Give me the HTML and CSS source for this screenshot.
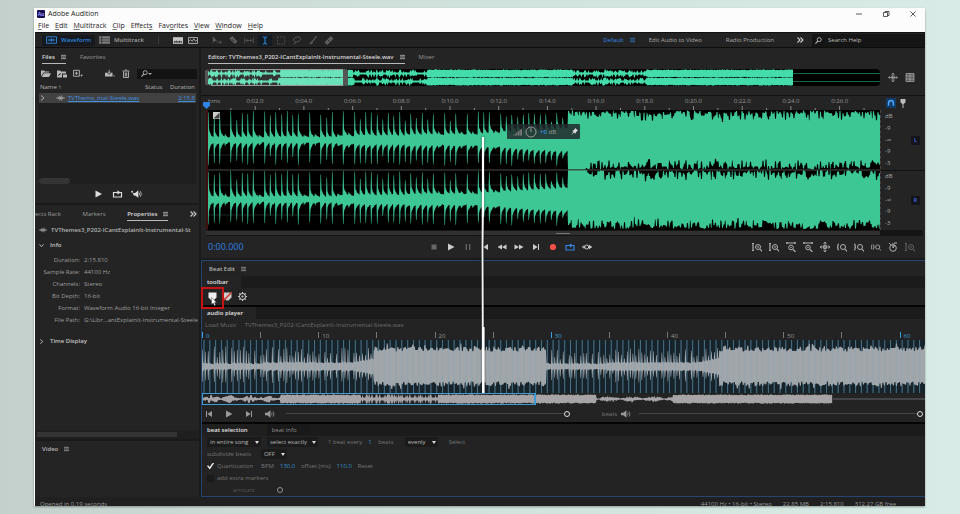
FILE: index.html
```html
<!DOCTYPE html>
<html lang="en">
<head>
<meta charset="utf-8">
<title>Adobe Audition</title>
<link rel="stylesheet" href="styles.css">
</head>
<body>
<svg class="defs" aria-hidden="true">
  <symbol id="menu" viewBox="0 0 6 6"><path d="M0 1h6M0 3h6M0 5h6" stroke="currentColor" stroke-width=".8"/></symbol>
  <symbol id="wave" viewBox="0 0 12 8"><path d="M0 4h12M3 2.500v3M4.500 1v6M6 2v4M7.500 .5v7M9 2.500v3" stroke="currentColor" fill="none"/></symbol>
  <symbol id="waveframe" viewBox="0 0 12 8"><path d="M.5.5h11v7H.5zM2 4h8M4 3v2M6 2v4M8 3v2" stroke="currentColor" fill="none"/></symbol>
  <symbol id="tracks" viewBox="0 0 12 8"><path d="M0 0h12v8H0z" fill="currentColor" opacity=".75"/><path d="M0 2.700h12M0 5.300h12M3 0v8" stroke="#222" stroke-width=".7"/></symbol>
  <symbol id="spectral" viewBox="0 0 12 8"><path d="M0 0h12v8H0z" fill="currentColor"/><path d="M1 5.500h10M2 4.500v2.500M4 4v3M6 5v2M8 4v3M10 5v2" stroke="#222" stroke-width=".8"/></symbol>
  <symbol id="pitch" viewBox="0 0 12 8"><path d="M.5.5h11v7H.5zM1 5l2-2 2 2 2-3 2 3 2-2" stroke="currentColor" fill="none"/></symbol>
  <symbol id="move" viewBox="0 0 12 10"><path d="M1 0v8l2.500-2.500H6z" fill="currentColor"/><path d="M6 7h5M9.500 5.500L11.500 7 9.500 8.500" stroke="currentColor" fill="none"/></symbol>
  <symbol id="razor" viewBox="0 0 10 10"><path d="M4 0l6 6-3 3-6-6z" fill="currentColor"/><path d="M3.500 3.500l3 3" stroke="#222"/></symbol>
  <symbol id="slip" viewBox="0 0 14 10"><path d="M1 1v8M13 1v8M3 5h8M5 3L3 5l2 2M9 3l2 2-2 2" stroke="currentColor" fill="none"/></symbol>
  <symbol id="ibeam" viewBox="0 0 10 10"><path d="M2.500 1c2 0 2.500.5 2.500 1.500 0-1 .5-1.500 2.500-1.500M5 2v6M2.500 9C4.500 9 5 8.500 5 7.500 5 8.500 5.500 9 7.500 9" stroke="currentColor" fill="none" stroke-width="1.100"/></symbol>
  <symbol id="marquee" viewBox="0 0 10 10"><path d="M1 1h8v8H1z" stroke="currentColor" fill="none" stroke-dasharray="1.500 1.500"/></symbol>
  <symbol id="lasso" viewBox="0 0 10 10"><path d="M3 6.500C-1 5 2 1 6 1s4 4 0 5.200c-2 .5-3 .3-3 .3s1 2-1.500 2.500" stroke="currentColor" fill="none"/></symbol>
  <symbol id="brush" viewBox="0 0 10 10"><path d="M9 0L4.500 6" stroke="currentColor" stroke-width="1.300"/><path d="M4 5.500l1.300 1C4.500 9 3 9 1 9.500 2 8 2 6.500 4 5.500z" fill="currentColor"/></symbol>
  <symbol id="heal" viewBox="0 0 10 10"><path d="M7 0l3 3-7 7-3-3z" fill="currentColor"/><path d="M3.500 4l2.500 2.500" stroke="#222"/></symbol>
  <symbol id="more" viewBox="0 0 7 6"><path d="M.5.5L3 3 .5 5.500M3.500.5L6 3 3.500 5.500" stroke="currentColor" fill="none" stroke-width="1.100"/></symbol>
  <symbol id="search" viewBox="0 0 8 8"><circle cx="4.800" cy="3" r="2.300" stroke="currentColor" fill="none"/><path d="M3.200 4.700L.5 7.500" stroke="currentColor" stroke-width="1.200"/></symbol>
  <symbol id="folder" viewBox="0 0 10 8"><path d="M0 1h3l1 1h4v1H2.500L0 7zM2.800 3.700H10L8 7.500H.8z" fill="currentColor"/></symbol>
  <symbol id="import" viewBox="0 0 10 8"><path d="M0 1h3l1 1h5v2H5v4H0z" fill="currentColor"/><path d="M6 5h4v3H6z" fill="currentColor"/><path d="M1 6l3-2" stroke="#222"/></symbol>
  <symbol id="newfile" viewBox="0 0 11 8"><path d="M.5.500h6.500v6.500H.5zM2 3.700h3.500M3.700 2v3.500" stroke="currentColor" fill="none"/><path d="M8 5.500h3L9.500 7.500z" fill="currentColor"/></symbol>
  <symbol id="insert" viewBox="0 0 12 9"><path d="M0 3.500h2.500L5 6l2.500-2.500H9V8H0z" fill="currentColor"/><path d="M5 0v4M3.500 2.500L5 4.500l1.500-2" stroke="currentColor" fill="none"/><path d="M9.500 7H12l-1.200 1.500z" fill="currentColor"/></symbol>
  <symbol id="trash" viewBox="0 0 8 9"><path d="M.5 2h7M3 1h2M1.500 2.500v6h5v-6M3.300 3.500V7.500M4.700 3.500V7.500" stroke="currentColor" fill="none" stroke-width=".9"/></symbol>
  <symbol id="chev" viewBox="0 0 5 6"><path d="M1 .5L4 3 1 5.500" stroke="currentColor" fill="none"/></symbol>
  <symbol id="play" viewBox="0 0 8 8"><path d="M1 .5L7.500 4 1 7.500z" fill="currentColor"/></symbol>
  <symbol id="stop" viewBox="0 0 8 8"><path d="M1.500 1.500h5v5h-5z" fill="currentColor"/></symbol>
  <symbol id="pause" viewBox="0 0 8 8"><path d="M2.300 1v6M5.700 1v6" stroke="currentColor" stroke-width="1.300"/></symbol>
  <symbol id="prev" viewBox="0 0 8 8"><path d="M1.500 1v6" stroke="currentColor"/><path d="M7 1v6L2.300 4z" fill="currentColor"/></symbol>
  <symbol id="next" viewBox="0 0 8 8"><path d="M6.500 1v6" stroke="currentColor"/><path d="M1 1v6l4.700-3z" fill="currentColor"/></symbol>
  <symbol id="rew" viewBox="0 0 10 8"><path d="M5 1.500v5L.5 4zM9.500 1.500v5L5 4z" fill="currentColor"/></symbol>
  <symbol id="ff" viewBox="0 0 10 8"><path d="M5 1.500v5L9.500 4zM.5 1.500v5L5 4z" fill="currentColor"/></symbol>
  <symbol id="rec" viewBox="0 0 8 8"><circle cx="4" cy="4" r="3.100" fill="currentColor"/></symbol>
  <symbol id="loop" viewBox="0 0 10 8"><path d="M3 2.500H1v4.500h8V2.500H7" stroke="currentColor" fill="none" stroke-width="1.200"/><path d="M2.500 2.500h3" stroke="currentColor" stroke-width="1.200"/><path d="M5 .3v4.400l3-2.200z" fill="currentColor"/></symbol>
  <symbol id="skip" viewBox="0 0 10 8"><path d="M0 4h3M7 4h3M2 2.500v3" stroke="currentColor"/><circle cx="4.700" cy="4" r="2" stroke="currentColor" fill="none"/><path d="M7 1.500v5L9.500 4z" fill="currentColor"/></symbol>
  <symbol id="speaker" viewBox="0 0 11 8"><path d="M0 2.500h2.500L6 0v8L2.500 5.500H0z" fill="currentColor"/><path d="M7.300 2.500q1 1.500 0 3M8.800 1q2.200 3 0 6" stroke="currentColor" fill="none" stroke-width=".8"/></symbol>
  <symbol id="autoplay" viewBox="0 0 12 8"><path d="M2 3h2.500L8 0v8L4.500 5.500H3z" fill="currentColor"/><path d="M9 2.500q1 1.500 0 3M10.300 1q2 3 0 6" stroke="currentColor" fill="none" stroke-width=".8"/><circle cx="1.200" cy="1.500" r="1" fill="currentColor"/></symbol>
  <symbol id="zoomamp" viewBox="0 0 10 10"><path d="M1 1v8M0 1.500h2M0 8.500h2M8 7L10 9.500" stroke="currentColor" stroke-width="1.200"/><circle cx="6" cy="5" r="2.500" stroke="currentColor" fill="none"/><path d="M4.800 5h2.400M6 3.800v2.400" stroke="currentColor" stroke-width=".6"/></symbol>
  <symbol id="zoomtime" viewBox="0 0 10 10"><path d="M0 1h10M1 0v2M9 0v2M7 7.500L9.500 10" stroke="currentColor" stroke-width="1.200"/><circle cx="5" cy="5.500" r="2.300" stroke="currentColor" fill="none"/><path d="M4 5.500h2" stroke="currentColor" stroke-width=".7"/></symbol>
  <symbol id="zoomsel" viewBox="0 0 10 10"><path d="M2 2Q.5 2 1 4 1 5 0 5q1 0 1 1-.5 2 1 2M8 7L10 9.500" stroke="currentColor" fill="none" stroke-width="1.100"/><circle cx="6" cy="5" r="2.500" stroke="currentColor" fill="none"/></symbol>
  <symbol id="zoomend" viewBox="0 0 10 10"><path d="M0 2Q1.500 2 1 4 1 5 2 5 1 5 1 6 1.500 8 0 8M8 7L10 9.500" stroke="currentColor" fill="none" stroke-width="1.100"/><circle cx="6" cy="5" r="2.500" stroke="currentColor" fill="none"/></symbol>
  <symbol id="zoomboth" viewBox="0 0 12 10"><path d="M1.500 2Q.5 2 .8 4 .8 5 0 5q.8 0 .8 1-.3 2 .7 2M2.500 2Q3.500 2 3.200 4 3.200 5 4 5q-.8 0-.8 1 .3 2-.7 2M10 7L12 9.500" stroke="currentColor" fill="none"/><circle cx="8" cy="5" r="2.500" stroke="currentColor" fill="none"/></symbol>
  <symbol id="zoomall" viewBox="0 0 10 10"><path d="M5 0v10M3.500 3.500h3v3h-3zM0 5h10M3.500 2L5 0l1.500 2M3.500 8L5 10l1.500-2M2 3.500L0 5l2 1.500M8 3.500L10 5 8 6.500" stroke="currentColor" fill="none" stroke-width=".8"/></symbol>
  <symbol id="clock" viewBox="0 0 10 10"><circle cx="5" cy="6" r="3.300" stroke="currentColor" fill="none"/><path d="M5 1v5l2-3M1 1l2 2M6 1h3" stroke="currentColor" fill="none"/></symbol>
  <symbol id="mixer" viewBox="0 0 9 9"><path d="M.5.500h8v8h-8zM.5 3h8M.5 6h8M4.500 .5v8" stroke="currentColor" fill="#555" stroke-width=".8"/></symbol>
  <symbol id="magnet" viewBox="0 0 10 9"><path d="M2 8V4.500a3 3 0 0 1 6 0V8" stroke="currentColor" fill="none" stroke-width="2"/></symbol>
  <symbol id="marker" viewBox="0 0 6 9"><path d="M.5 0h5v3.500L3.500 5h-1L.5 3.500z" fill="currentColor"/><path d="M3 4v5" stroke="currentColor"/></symbol>
  <symbol id="pin" viewBox="0 0 8 8"><path d="M5 0l3 3-1 .5L5.500 5 5 6.500 1.500 3 3 2.500 4.500 1zM2.800 4.300L0 8l3.700-2.800z" fill="currentColor"/></symbol>
  <symbol id="gear" viewBox="0 0 10 10"><circle cx="5" cy="5" r="3.400" fill="none" stroke="currentColor" stroke-width="1.100"/><circle cx="5" cy="5" r="1.200" fill="currentColor"/><path d="M5 0v2M5 8v2M0 5h2M8 5h2M1.500 1.500l1.300 1.300M7.200 7.200l1.300 1.300M1.500 8.500l1.300-1.300M7.200 2.800l1.300-1.300" stroke="currentColor" stroke-width="1.300"/></symbol>
</svg>

<div class="window">
  <header class="titlebar">
    <span class="logo">Au</span><span class="title">Adobe Audition</span>
    <div class="winbtns">
      <button aria-label="Minimize"><svg viewBox="0 0 8 8"><path d="M1 4h6"/></svg></button>
      <button aria-label="Restore"><svg viewBox="0 0 8 8"><path d="M1.500 2.500h4v4h-4zM3 2.500v-1h4v4H5.500"/></svg></button>
      <button aria-label="Close"><svg viewBox="0 0 8 8"><path d="M1.500 1.500l5 5M6.500 1.500l-5 5"/></svg></button>
    </div>
  </header>
  <nav class="menubar">
    <button><u>F</u>ile</button><button><u>E</u>dit</button><button><u>M</u>ultitrack</button><button><u>C</u>lip</button><button>Effect<u>s</u></button><button>Fav<u>o</u>rites</button><button><u>V</u>iew</button><button><u>W</u>indow</button><button><u>H</u>elp</button>
  </nav>

  <div class="workbar">
    <button class="mode on"><svg><use href="#waveframe"/></svg>Waveform</button>
    <button class="mode"><svg><use href="#tracks"/></svg>Multitrack</button>
    <i class="sep"></i>
    <div class="views">
      <button aria-label="Spectral frequency"><svg><use href="#spectral"/></svg></button>
      <button aria-label="Spectral pitch"><svg><use href="#pitch"/></svg></button>
    </div>
    <div class="tools">
      <button aria-label="Move"><svg><use href="#move"/></svg></button>
      <button aria-label="Razor"><svg><use href="#razor"/></svg></button>
      <button aria-label="Slip"><svg><use href="#slip"/></svg></button>
      <button class="active" aria-label="Time selection"><svg><use href="#ibeam"/></svg></button>
      <button aria-label="Marquee"><svg><use href="#marquee"/></svg></button>
      <button aria-label="Lasso"><svg><use href="#lasso"/></svg></button>
      <button aria-label="Brush"><svg><use href="#brush"/></svg></button>
      <button aria-label="Healing"><svg><use href="#heal"/></svg></button>
    </div>
    <div class="spaces">
      <button class="blue">Default</button><svg class="mi blue"><use href="#menu"/></svg>
      <button class="edit">Edit Audio to Video</button><button class="radio">Radio Production</button>
      <svg class="dbl"><use href="#more"/></svg>
    </div>
    <label class="help"><svg><use href="#search"/></svg><input type="text" value="Search Help" aria-label="Search Help"></label>
  </div>

  <main class="main">
    <div class="left">
      <section class="panel files">
        <div class="tabs"><button class="tab on">Files<svg class="mi"><use href="#menu"/></svg></button><button class="tab">Favorites</button></div>
        <div class="ftools">
          <button aria-label="Open"><svg><use href="#folder"/></svg></button>
          <button aria-label="Import"><svg><use href="#import"/></svg></button>
          <button aria-label="New"><svg><use href="#newfile"/></svg></button>
          <button class="far" aria-label="Insert"><svg><use href="#insert"/></svg></button>
          <button aria-label="Delete"><svg><use href="#trash"/></svg></button>
          <label class="fsearch"><svg><use href="#search"/></svg><i class="tri"></i><input type="text" aria-label="Filter files"></label>
        </div>
        <div class="list">
          <table>
            <thead><tr><th class="name">Name <b>↑</b></th><th class="status">Status</th><th class="dur">Duration</th></tr></thead>
            <tbody><tr><td><div class="fname"><svg class="cv"><use href="#chev"/></svg><svg class="wv"><use href="#wave"/></svg><a href="#">TVThemo_ntal-Steele.wav</a></div></td><td></td><td class="dur"><a href="#">2:15.8</a></td></tr></tbody>
          </table>
          <i class="hscroll"></i>
        </div>
        <div class="preview">
          <button aria-label="Play"><svg><use href="#play"/></svg></button>
          <button aria-label="Loop"><svg><use href="#loop"/></svg></button>
          <button aria-label="Auto play"><svg><use href="#autoplay"/></svg></button>
        </div>
      </section>
      <section class="panel props">
        <div class="tabs"><button class="tab">ects Rack</button><button class="tab">Markers</button><button class="tab on">Properties<svg class="mi"><use href="#menu"/></svg></button><svg class="dbl"><use href="#more"/></svg></div>
        <p class="pfile"><svg><use href="#wave"/></svg>TVThemes3_P202-ICantExplainIt-Instrumental-St</p>
        <h3 class="fold open"><svg><use href="#chev"/></svg>Info</h3>
        <dl>
          <dt>Duration:</dt><dd>2:15.810</dd>
          <dt>Sample Rate:</dt><dd>44100 Hz</dd>
          <dt>Channels:</dt><dd>Stereo</dd>
          <dt>Bit Depth:</dt><dd>16-bit</dd>
          <dt>Format:</dt><dd>Waveform Audio 16-bit Integer</dd>
          <dt>File Path:</dt><dd>G:\Libr...antExplainIt-Instrumental-Steele</dd>
        </dl>
        <h3 class="fold"><svg><use href="#chev"/></svg>Time Display</h3>
        <div class="pscroll"><i></i></div>
      </section>
      <section class="panel video"><h3>Video<svg class="mi"><use href="#menu"/></svg></h3></section>
    </div>

    <div class="right">
      <section class="panel editor">
        <div class="tabs"><button class="tab on">Editor: TVThemes3_P202-ICantExplainIt-Instrumental-Steele.wav<svg class="mi"><use href="#menu"/></svg></button><button class="tab">Mixer</button></div>
        <div class="overrow">
          <div class="over"><svg id="overview" viewBox="0 0 675 17" preserveAspectRatio="none"></svg></div>
          <div class="side"><button aria-label="Zoom out full"><svg><use href="#zoomall"/></svg></button><button aria-label="Channels"><svg><use href="#mixer"/></svg></button></div>
        </div>
        <div class="rulerrow">
          <div class="ruler"><i class="playhead"></i>
            <div class="labels"><span class="hms">hms</span><span>0:02.0</span><span>0:04.0</span><span>0:06.0</span><span>0:08.0</span><span>0:10.0</span><span>0:12.0</span><span>0:14.0</span><span>0:16.0</span><span>0:18.0</span><span>0:20.0</span><span>0:22.0</span><span>0:24.0</span><span>0:26.0</span></div>
            <svg class="ticks" id="ticks" viewBox="0 0 672 5" preserveAspectRatio="none"></svg>
          </div>
          <div class="side"><button class="mag" aria-label="Snap"><svg><use href="#magnet"/></svg></button><button aria-label="Marker"><svg class="mkr"><use href="#marker"/></svg></button></div>
        </div>
        <div class="waverow">
          <div class="wavebox">
            <svg id="main" viewBox="0 0 672 120" preserveAspectRatio="none"></svg>
            <svg class="fade" viewBox="0 0 8 8"><path d="M0 0h8v8H0z" fill="#ccc"/><path d="M7.500 .5v7h-7z" fill="#444"/></svg>
            <div class="hud"><svg class="bars" viewBox="0 0 10 8"><path d="M0 8L10 0v8z" fill="#777"/><path d="M2.500 0v8M5 0v8M7.500 0v8" stroke="#2c4a42" stroke-width=".7"/></svg><svg class="dial" viewBox="0 0 12 12"><circle cx="6" cy="6" r="5"/><path d="M6 6V2"/></svg><span><b>+0</b> dB</span><svg class="hpin"><use href="#pin"/></svg></div>
          </div>
          <div class="scales">
            <div class="scale"><span>dB</span><span>-9</span><span>-∞</span><span>-9</span><span>-3</span></div><button class="ch">L</button>
            <div class="scale"><span>dB</span><span>-9</span><span>-∞</span><span>-9</span><span>-3</span></div><button class="ch">R</button>
          </div>
        </div>
        <div class="wscroll"><i></i></div>
        <div class="transport">
          <output>0:00.000</output>
          <div class="keys">
            <button class="dim" aria-label="Stop"><svg><use href="#stop"/></svg></button>
            <button aria-label="Play"><svg><use href="#play"/></svg></button>
            <button class="dim" aria-label="Pause"><svg><use href="#pause"/></svg></button>
            <button aria-label="Previous"><svg><use href="#prev"/></svg></button>
            <button aria-label="Rewind"><svg><use href="#rew"/></svg></button>
            <button aria-label="Fast forward"><svg><use href="#ff"/></svg></button>
            <button aria-label="Next"><svg><use href="#next"/></svg></button>
            <button class="red" aria-label="Record"><svg><use href="#rec"/></svg></button>
            <button class="blue" aria-label="Loop"><svg><use href="#loop"/></svg></button>
            <button aria-label="Skip selection"><svg><use href="#skip"/></svg></button>
          </div>
          <div class="keys zooms">
            <button aria-label="Zoom in amplitude"><svg><use href="#zoomamp"/></svg></button>
            <button aria-label="Zoom out amplitude"><svg><use href="#zoomamp"/></svg></button>
            <button aria-label="Zoom in time"><svg><use href="#zoomtime"/></svg></button>
            <button aria-label="Zoom out time"><svg><use href="#zoomtime"/></svg></button>
            <button aria-label="Zoom full"><svg><use href="#zoomall"/></svg></button>
            <button aria-label="Zoom to in point"><svg><use href="#zoomsel"/></svg></button>
            <button aria-label="Zoom to out point"><svg><use href="#zoomend"/></svg></button>
            <button aria-label="Zoom to selection"><svg><use href="#zoomboth"/></svg></button>
            <button aria-label="Scroll"><svg><use href="#clock"/></svg></button>
            <button class="dim" aria-label="Zoom reset"><svg><use href="#zoomamp"/></svg></button>
          </div>
        </div>
      </section>

      <section class="beat">
        <h3 class="btitle">Beat Edit<svg class="mi"><use href="#menu"/></svg></h3>
        <div class="btabs"><button class="on">toolbar</button></div>
        <div class="btools">
          <button aria-label="Add markers"><svg viewBox="0 0 8 9"><path d="M0 .5h8v5L5 8.500H3L0 5.500z" fill="#eee"/></svg></button>
          <button aria-label="Remove markers"><svg viewBox="0 0 8 9"><path d="M0 .5h8v5L5 8.500H3L0 5.500z" fill="#ccc"/><path d="M0 8.500L8 .5" stroke="#d0392b" stroke-width="1.500"/></svg></button>
          <button aria-label="Settings"><svg><use href="#gear"/></svg></button>
          <i class="focus"></i>
          <svg class="cursor" viewBox="0 0 6 9"><path d="M.5.5v7l1.700-1.500L3.400 8.700l1.300-.6-1.200-2.500h2.200z" fill="#fff" stroke="#222" stroke-width=".4"/></svg>
        </div>
        <div class="btabs ruled"><button class="on">audio player</button></div>
        <div class="load"><button>Load Music</button><span>TVThemes3_P202-ICantExplainIt-Instrumental-Steele.wav</span></div>
        <div class="bruler"><span class="blue">0</span><span></span><span>10</span><span></span><span>20</span><span></span><span class="blue">30</span><span></span><span>40</span><span></span><span>50</span><span></span><span class="blue">60</span></div>
        <svg class="bwave" id="beatwave" viewBox="0 0 722 53" preserveAspectRatio="none"></svg>
        <div class="bover"><svg id="beatover" viewBox="0 0 722 12" preserveAspectRatio="none"></svg><i></i></div>
        <div class="player">
          <button aria-label="Start"><svg><use href="#prev"/></svg></button>
          <button aria-label="Play"><svg><use href="#play"/></svg></button>
          <button aria-label="End"><svg><use href="#next"/></svg></button>
          <svg class="spk"><use href="#speaker"/></svg>
          <input type="range" value="100" aria-label="Music volume">
          <label for="bv">beats</label><svg class="spk s2"><use href="#speaker"/></svg>
          <input id="bv" type="range" value="100">
        </div>
        <div class="btabs ruled two"><button class="on bs">beat selection</button><button class="bi">beat info</button></div>
        <div class="form">
          <div class="row">
            <span class="sel w1"><select aria-label="Range"><option>in entire song</option></select></span>
            <span class="sel w2"><select aria-label="Mode"><option>select exactly</option></select></span>
            <label for="every">1 beat every</label><input id="every" class="num one" value="1"><span>beats</span>
            <span class="sel w3"><select aria-label="Spacing"><option>evenly</option></select></span>
            <button>Select</button>
          </div>
          <div class="row"><label for="sub">subdivide beats</label><span class="sel w4"><select id="sub"><option>OFF</option></select></span></div>
          <div class="row">
            <label class="ck"><input type="checkbox" checked>Quantization</label>
            <label class="bpm" for="bpm">BPM</label><input class="num" id="bpm" value="130.0">
            <label for="off">offset (ms)</label><input class="num" id="off" value="110.0">
            <button>Reset</button>
          </div>
          <div class="row"><label class="ck"><input type="checkbox">add extra markers</label></div>
          <div class="row faint"><label class="amt" for="amt">amount</label><input type="range" id="amt" value="0"></div>
        </div>
      </section>
      <svg class="pointer" viewBox="0 0 6 256" preserveAspectRatio="none" aria-hidden="true"><path d="M3.200 0L4 70 3.400 110 4 256H2L1.600 110 1.800 70z" fill="#f4f4f4"/><path d="M3 0v80M3.500 190v66" stroke="#fff" stroke-width="2.200"/></svg>
    </div>
  </main>
  <footer class="statusbar"><span>Opened in 0.19 seconds</span><span class="fmt">44100 Hz • 16-bit • Stereo</span><span>22.85 MB</span><span>2:15.810</span><span>312.27 GB free</span></footer>
</div>
<script src="waves.js"></script>
</body>
</html>
```
FILE: styles.css
```css
* { box-sizing: border-box; }
body {
  margin: 0; min-height: 100vh; padding: 8px 35px 8px 34px; display: flex;
  background: linear-gradient(90deg, #c4d0cc 0, #cddbd6 25%, #d1e5de 60%, #d8ebe6 100%);
  font: 6px/8px "Open Sans", "Noto Sans", sans-serif; color: #b4b4b4;
}
button, input, select {
  font: inherit; color: inherit; background: none; border: 0; padding: 0; margin: 0;
  border-radius: 0; outline: 0; white-space: nowrap;
}
button { display: flex; align-items: center; }
h3, p, dl, dd { margin: 0; font-size: 6px; font-weight: 400; }
svg { display: block; flex: none; }
a { color: inherit; }
.defs { position: absolute; width: 0; height: 0; }
.blue { color: #3584d8; }
.mi { width: 5px; height: 6px; }
.dbl { width: 7px; height: 6px; color: #ccc; }
.dim { opacity: .4; }
.tri { border: 2px solid transparent; border-top-color: #aaa; border-bottom: 0; }

.window {
  flex: 1; min-width: 0; display: flex; flex-direction: column; overflow: hidden;
  border-left: 1px solid #fff; background: #1a1a1a; box-shadow: 0 1px 2px #0005;
}
.titlebar, .menubar { background: #fdfcfd; color: #222; font-size: 7px; display: flex; align-items: center; height: 12px; }
.titlebar { padding-left: 2px; }
.menubar { padding: 0 0 0 3px; gap: 6px; }
.logo { width: 8px; height: 8px; background: #16104e; color: #9b95ff; font-size: 5px; font-weight: 700; text-align: center; margin-right: 3px; border-radius: 1px; }
.winbtns { margin-left: auto; display: flex; gap: 19px; padding-right: 8px; }
.winbtns svg { width: 8px; height: 8px; fill: none; stroke: #333; stroke-width: .8; }
.menubar u { text-underline-offset: 1px; text-decoration-thickness: 1px; text-decoration-color: #777; }

.workbar { height: 16px; background: #232323; border-top: 1px solid #111; border-bottom: 1px solid #0d0d0d; display: flex; align-items: center; }
.mode { margin-left: 7px; padding: 0 4px; height: 11px; gap: 4px; color: #a0a0a0; font-weight: 600; }
.mode svg { width: 11px; height: 8px; }
.mode.on { color: #2f86de; background: #161a1f; }
.mode + .mode { margin-left: 0; }
.sep { width: 1px; height: 8px; background: #3a3a3a; margin-left: 10px; }
.views, .tools { display: flex; align-items: center; }
.views { gap: 5px; margin-left: 14px; color: #c4c4c4; }
.views svg { width: 10px; height: 7px; }
.tools { margin-left: 12px; gap: 2px; color: #5e5e5e; }
.tools button { width: 14px; height: 11px; justify-content: center; }
.tools svg { width: 10px; height: 9px; }
.tools .active { color: #3a90e8; background: #131a22; }
.spaces { margin-left: auto; display: flex; align-items: center; color: #a8a8a8; }
.spaces .blue { color: #3088e8; }
.spaces .mi { margin-left: 6px; }
.spaces .edit { margin-left: 14px; }
.spaces .radio { margin-left: 24px; }
.spaces .dbl { margin: 0 8px 0 23px; }
.help { width: 113px; height: 13px; background: #151515; display: flex; align-items: center; gap: 6px; padding-left: 3px; color: #bbb; }
.help svg { width: 7px; height: 7px; }
.help input { width: 80px; }

.main { flex: 1; display: grid; grid-template-columns: 166px minmax(0, 1fr); }
.left { display: flex; flex-direction: column; gap: 2px; padding-right: 2px; min-width: 0; }
.right { position: relative; min-width: 0; display: flex; flex-direction: column; gap: 2px; }
.panel { background: #242424; min-width: 0; }
.tabs { display: flex; align-items: center; height: 18px; padding-left: 7px; gap: 14px; white-space: nowrap; }
.tab { height: 13px; gap: 6px; color: #9a9a9a; border-bottom: 1px solid transparent; }
.tab.on { color: #dadada; font-weight: 600; border-color: #b9b9b9; }

.files { display: flex; flex-direction: column; height: 155px; }
.ftools { display: flex; align-items: center; height: 15px; padding: 0 2px 0 6px; gap: 6px; color: #b8b8b8; }
.ftools svg { width: 10px; height: 9px; }
.ftools .far { margin-left: 16px; }
.fsearch { flex: 1; height: 10px; background: #131313; display: flex; align-items: center; padding-left: 4px; }
.fsearch svg { width: 7px; height: 7px; }
.fsearch input { width: 30px; }
.list { flex: 1; margin: 0 3px 0 4px; background: #1f1f1f; display: flex; flex-direction: column; justify-content: space-between; }
table { width: 100%; border-collapse: collapse; table-layout: fixed; }
th { height: 12px; padding: 0 1px; font-weight: 400; text-align: left; background: #242424; }
th b { color: #ccc; }
.status { width: 25px; } .dur { width: 27px; }
tbody tr { background: #414141; color: #3f92e2; }
td { height: 10px; padding: 0 1px; }
td.dur { text-align: right; }
.fname { display: flex; align-items: center; gap: 3px; white-space: nowrap; }
.fname svg { color: #aaa; }
.cv { width: 5px; height: 6px; margin-right: 8px; }
.wv { width: 9px; height: 6px; }
.hscroll { width: 31px; height: 6px; border-radius: 3px; background: #353535; }
.preview { height: 19px; display: flex; align-items: center; justify-content: center; gap: 8px; color: #ddd; }
.preview svg { width: 11px; height: 8px; }

.props { flex: 1; display: flex; flex-direction: column; overflow: hidden; }
.props .tabs { padding: 0 2px 0 0; gap: 0; justify-content: space-between; }
.pfile { display: flex; align-items: center; gap: 4px; height: 14px; padding-left: 4px; white-space: nowrap; font-weight: 600; }
.pfile svg { width: 8px; height: 6px; }
.fold { display: flex; align-items: center; gap: 6px; height: 16px; padding-left: 4px; color: #c4c4c4; font-weight: 600; }
.fold svg { width: 5px; height: 5px; }
.open svg { transform: rotate(90deg); }
dl { display: grid; grid-template-columns: 45px minmax(0, 1fr); column-gap: 4px; grid-auto-rows: 12px; align-items: center; padding-top: 1px; color: #9e9e9e; }
dt { text-align: right; white-space: nowrap; }
dd { white-space: nowrap; }
dl + .fold { margin-top: 7px; }
.pscroll { margin-top: auto; padding: 2px; background: #1f1f1f; }
.pscroll i { display: block; width: 140px; height: 5px; background: #343434; }
.video { height: 56px; }
.video h3, .btitle { display: flex; align-items: center; gap: 6px; height: 15px; padding-left: 7px; color: #b4b4b4; font-weight: 600; }

.side { width: 45px; display: flex; align-items: center; gap: 7px; padding-left: 8px; color: #a4a4a4; }
.side svg { width: 10px; height: 9px; }
.overrow { display: flex; padding: 3px 0 9px 4px; }
.over { flex: 1; min-width: 0; height: 17px; background: #000; border-radius: 4px; overflow: hidden; }
.over svg, #main { width: 100%; height: 100%; }
.rulerrow { display: flex; height: 15px; border-top: 1px solid #111; padding-left: 7px; }
.ruler { position: relative; flex: 1; min-width: 0; overflow: visible; display: flex; flex-direction: column; justify-content: space-between; }
.labels { display: flex; height: 9px; padding-top: 1px; color: #989898; }
.labels span { width: 7.25%; text-align: center; }
.labels .hms { width: 3.37%; text-align: left; }
.ticks { width: 100%; height: 5px; }
.playhead { position: absolute; left: -5px; bottom: 1px; width: 7px; height: 7px; background: #2f86e8; border-radius: 1px; clip-path: polygon(0 0, 100% 0, 100% 50%, 50% 100%, 0 50%); }
.rulerrow .side { padding-left: 6px; gap: 4px; }
.mag { background: #123a66; color: #4aa0f4; width: 10px; height: 10px; justify-content: center; }
.mag svg { width: 8px; height: 8px; }
.side .mkr { width: 6px; height: 9px; color: #bbb; }
.waverow { display: flex; height: 120px; padding-left: 5px; }
.wavebox { position: relative; flex: 1; min-width: 0; background: #000; border-left: 2px solid #401010; }
.fade { position: absolute; left: 5px; top: 2px; width: 7px; height: 7px; }
.hud { position: absolute; left: 44.5%; top: 14px; width: 73px; height: 15px; background: #20282ad8; display: flex; align-items: center; gap: 6px; padding: 0 2px 0 6px; border-radius: 1px; color: #999; white-space: nowrap; }
.hud b { color: #3b8fe0; font-weight: 600; }
.bars { width: 9px; height: 8px; }
.dial { width: 12px; height: 12px; margin: 0 -3px; fill: none; stroke: #999; }
.hpin { width: 7px; height: 7px; color: #ddd; margin-left: auto; }
.scales { width: 45px; display: grid; grid-template: 1fr 1fr / 30px 1fr; align-items: center; border-left: 1px dashed #444; background: linear-gradient(#111, #111) center / 100% 1px no-repeat; }
.scale { height: 60px; padding: 2px 0 3px 4px; display: flex; flex-direction: column; justify-content: space-between; color: #a8a8a8; }
.ch { width: 9px; height: 9px; background: #14141c; color: #4460d8; font-size: 5px; font-weight: 700; justify-content: center; }
.wscroll { height: 6px; margin: 0 2px 0 5px; padding: 1px 0; background: #151515; }
.wscroll i { display: block; height: 4px; margin-right: 43px; background: linear-gradient(90deg, transparent 52%, #777 52%, #777 54%, transparent 54%) center / 100% 1px no-repeat, #303030; }
.transport { display: flex; align-items: center; height: 22px; padding-left: 7px; }
.transport output { width: 217px; color: #2f80e4; font-size: 9px; }
.keys { display: flex; color: #ccc; }
.keys button { width: 17px; height: 12px; justify-content: center; }
.keys svg { width: 10px; height: 8px; }
.keys .red { color: #f0504a; } .keys .blue { color: #3584e0; }
.zooms { margin-left: auto; padding-right: 7px; color: #b0b0b0; }
.zooms svg { height: 10px; }

.beat { border: 1px solid #24456f; border-right: 0; background: #232323; min-width: 0; flex: 1; }
.btabs { display: flex; height: 12px; background: #1b1b1b; }
.btabs button { padding: 0 13px 0 5px; color: #909090; background: #1f1f1f; }
.btabs .on { color: #e2e2e2; background: #242424; font-weight: 600; }
.ruled { border-top: 2px solid #050505; height: 14px; }
.btools { position: relative; height: 17px; display: flex; align-items: center; gap: 6px; padding-left: 6px; }
.btools svg { width: 9px; height: 9px; color: #ccc; }
.focus { position: absolute; left: -1px; top: -1px; width: 23px; height: 22px; border: 2px solid #c51414; }
.btools .cursor { position: absolute; left: 9px; top: 9px; width: 6px; height: 9px; }
.load { display: flex; gap: 8px; height: 11px; align-items: center; padding-left: 3px; color: #6c6c6c; }
.load span { white-space: nowrap; }
.bruler { display: flex; height: 10px; align-items: center; overflow: hidden; color: #999; }
.bruler span { flex: 0 0 8.04%; height: 6px; border-left: 1px solid #777; padding-left: 3px; line-height: 8px; }
.bruler .blue { color: #3aa0dc; border-color: #3aa0dc; }
.bwave { width: 100%; height: 53px; background: #17232a; }
.bover { position: relative; height: 12px; }
.bover svg { width: 100%; height: 12px; }
.bover i { position: absolute; inset: 0 53.8% 0 0; border: 1px solid #3f9bd6; border-right-width: 2px; }
.player { display: flex; align-items: center; height: 17px; padding: 0 2px 0 3px; color: #999; }
.player button { width: 20px; }
.player svg { width: 8px; height: 8px; }
.player .spk { width: 10px; margin-right: 11px; }
.player label { margin-left: 32px; color: #787878; }
.player .s2 { margin: 0 8px 0 4px; }
input[type=range] { appearance: none; flex: 1 1 0; min-width: 0; height: 8px; background: linear-gradient(#444, #444) center / 100% 1px no-repeat; }
input[type=range]::-webkit-slider-thumb { appearance: none; width: 6px; height: 6px; border-radius: 50%; border: 1px solid #ddd; background: #222; }
.two .bs { padding-right: 19px; background: #1f1f1f; }
.two .bi { background: #191919; }
.form { color: #757575; padding-left: 5px; }
.row { display: flex; align-items: center; height: 12px; gap: 6px; }
.sel { position: relative; background: #1b1b1b; color: #b8b8b8; height: 10px; }
.sel::after { content: ""; position: absolute; right: 2px; top: 4px; border: 2px solid transparent; border-top: 3px solid #ddd; border-bottom: 0; }
.sel select { appearance: none; width: 100%; height: 10px; padding-left: 3px; }
.w1 { width: 54px; } .w2 { width: 51px; margin-right: 4px; } .w3 { width: 33px; margin: 0 5px; } .w4 { width: 26px; margin-left: 4px; }
.num { width: 15px; color: #3590c8; }
.one { width: 4px; }
.ck { display: flex; align-items: center; gap: 3px; }
.ck input { appearance: none; width: 7px; height: 7px; background: #1a1a1a; }
.ck input:checked { background: #eee; clip-path: polygon(0 50%, 15% 40%, 38% 65%, 85% 0, 100% 12%, 40% 100%); }
.bpm { margin-left: 2px; }
.faint { opacity: .6; }
.faint .amt { margin: 0 16px 0 26px; }
.faint input { flex: 0 0 60px; background: none; }

.pointer { position: absolute; left: 38.5%; top: 89px; width: 6px; height: 256px; filter: drop-shadow(0 0 1px #0008); }
.statusbar { height: 9px; overflow: hidden; display: flex; gap: 11px; padding: 3px 29px 0 5px; background: #202020; color: #989898; white-space: nowrap; }
.fmt { margin-left: auto; }
```
FILE: waves.js
```js
// Draws the waveforms as SVG paths from a repeatable noise source.
const NS = "http://www.w3.org/2000/svg";
function noise(n) {
  const s = Math.sin(n * 127.1 + 11.7) * 43758.5453;
  return s - Math.floor(s);
}
function path(svg, d, attrs) {
  const p = document.createElementNS(NS, "path");
  p.setAttribute("d", d);
  for (const k in attrs) p.setAttribute(k, attrs[k]);
  svg.appendChild(p);
}
// env(x, side) returns the half height at x; side 0 is above, 1 below
function shape(x0, x1, step, cy, env) {
  const top = [], bottom = [];
  for (let x = x0; x <= x1; x += step) {
    top.push(x.toFixed(1) + " " + (cy - env(x, 0)).toFixed(1));
    bottom.push(x.toFixed(1) + " " + (cy + env(x, 1)).toFixed(1));
  }
  return "M" + top.join("L") + "L" + bottom.reverse().join("L") + "Z";
}
// Drum hits: one spike per beat with a decaying tail
function hits(x, side, beat, full, body, tail) {
  const half = beat / 2, i = Math.floor(x / half), p = x - i * half;
  const main = i % 2 === 0;
  const off = !main && noise(i * 3.3) > (x > beat * 12 ? 0.25 : 0.55);
  const r = noise(i + side * 50);
  if ((main || off) && p < 1) {
    const reach = main ? 0.85 + 0.15 * r : 0.6 + 0.35 * r;
    return full * reach * (side ? 0.9 : 1);
  }
  const peak = full * (main ? tail : off ? tail * 0.8 : tail * 0.3);
  return body + peak * Math.exp(-p / (half * 0.36)) + noise(x * 2.3 + side) * full * 0.05;
}

const main = document.getElementById("main");
path(main, "M0 15H672M0 45H672M0 75H672M0 105H672", { stroke: "#1c2420", "stroke-width": 1 });
[30, 89.5].forEach((cy, c) => {
  path(main, shape(0, 672, 0.5, cy, (x, s) => {
    if (x < 360) {
      const swell = x > 260 ? (x - 260) / 100 * 6 : 0;
      const body = 1.5 + swell + (x > 130 ? 1.5 : 0) + (x > 200 ? 1 : 0);
      return Math.min(29, hits(x, s, 11.24, 29, body, 0.5));
    }
    const i = Math.floor(x / 1.4);
    if (x < 378 && s !== c) return 29.5;
    const dip = noise(i + s * 31 + c * 77);
    return 29.5 - dip * dip * 9 - noise(Math.floor(x / 9) + s) * 4 * noise(i + 5);
  }), { fill: "#3cc795" });
});
path(main, "M0 60H672", { stroke: "#4b4b4b", "stroke-width": 1 });

let ticks = "";
for (let k = 1; k < 28; k++) ticks += `M${(k * 24.35 - 1.5).toFixed(1)} ${k % 2 ? 3 : 1}V5`;
path(document.getElementById("ticks"), ticks, { stroke: "#888", "stroke-width": 1 });

// Overview strip of the whole file
const over = document.getElementById("overview");
path(over, "M588 4.500H675M588 12.500H675", { stroke: "#1f7f60", "stroke-width": 0.8 });
const dense = x => x < 75 || (x > 148 && x < 222) || (x > 368 && x < 441);
[4.5, 12.5].forEach((cy, c) => {
  path(over, shape(0, 588, 0.7, cy, (x, s) => dense(x)
    ? 1.1 + (noise(Math.floor(x / 1.4) * 3 + c * 9) > 0.4 ? 3.2 * noise(x + s) : 0)
    : 4.2 - noise(x * 2 + s * 7 + c) * 1), { fill: "#45dcab" });
});
path(over, "M0 0H142V17H0Z", { fill: "#ffffff", opacity: 0.2 });
path(over, "M6 .5H138M6 16.500H138", { stroke: "#999", "stroke-width": 1 });
path(over, "M0 1H3V16H0ZM138 1H143V16H138Z", { fill: "#555" });

const bw = document.getElementById("beatwave");
const grid = w => { let d = ""; for (let x = 2; x < 722; x += 5.81) d += `M${x.toFixed(1)} 0V53`; path(bw, d, w); };
grid({ stroke: "#31566a", "stroke-width": 1 });
const loud = x => (x > 172 && x < 344) || x > 516;
path(bw, shape(0, 722, 0.5, 26.5, (x, s) => {
  if (loud(x)) {
    const i = Math.floor(x / 1.5);
    return 20 - noise(i + s * 13) * 5 + (noise(i * 1.7 + s) > 0.9 ? 3 : 0);
  }
  const t = x % 344;
  return hits(x, s, 5.81, 20 * (0.6 + 0.4 * noise(Math.floor(x / 2.9))), 2 + (t > 60 ? 1 : 0) + (t > 150 ? (t - 150) / 6 : 0), 0.3);
}), { fill: "#a0a6aa" });
grid({ stroke: "#7fa0b4", "stroke-width": 1, opacity: 0.35 });

const bo = document.getElementById("beatover");
path(bo, "M630 6H722", { stroke: "#666", "stroke-width": 1 });
path(bo, shape(0, 630, 0.7, 6, (x, s) => {
  if (x < 78) return 0.7 + 3.5 * noise(Math.floor(x / 2) + s) * Math.abs(Math.sin(x / 6));
  if (x > 158 && x < 236) return noise(x * 2) > 0.5 ? 4.6 : 1.4;
  if (x > 394 && x < 470) return 0.6 + 3 * noise(x + s) * Math.abs(Math.sin(x / 7));
  return 4.8 - noise(x * 2 + s) * 1.2;
}), { fill: "#a6a4a5" });
```
